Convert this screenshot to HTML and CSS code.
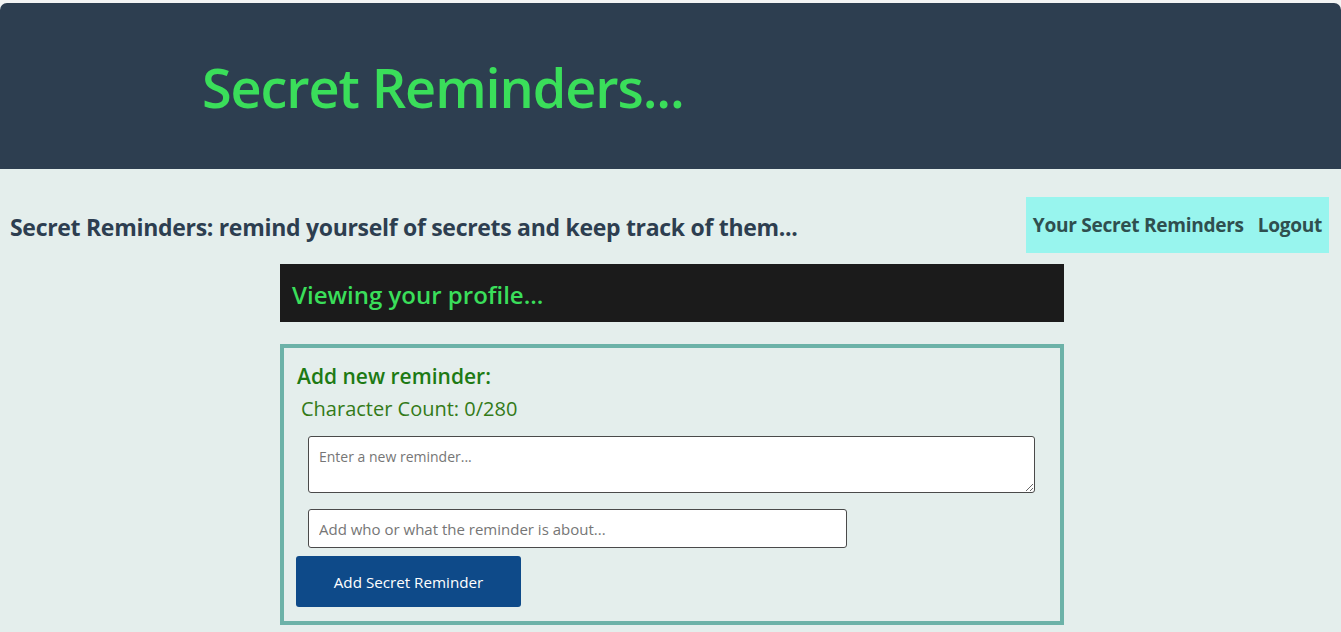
FILE: index.html
```html
<!DOCTYPE html>
<html lang="en">
<head>
<meta charset="utf-8">
<title>Secret Reminders</title>
<link rel="stylesheet" href="styles.css">
</head>
<body>
<div class="page">
  <header class="masthead">
    <h1 class="brand">Secret Reminders...</h1>
  </header>
  <div class="subbar">
    <h2 class="tagline">Secret Reminders: remind yourself of secrets and keep track of them...</h2>
    <nav class="nav">
      <a class="nav-link" href="#">Your Secret Reminders</a>
      <a class="nav-link" href="#">Logout</a>
    </nav>
  </div>
  <main class="content">
    <div class="profile-bar">
      <h3 class="profile-title">Viewing your profile...</h3>
    </div>
    <form class="reminder-form">
      <h4 class="form-title">Add new reminder:</h4>
      <p class="count">Character Count: 0/280</p>
      <textarea class="field-text" placeholder="Enter a new reminder..."></textarea>
      <input class="field-about" type="text" placeholder="Add who or what the reminder is about...">
      <button class="btn" type="button">Add Secret Reminder</button>
    </form>
  </main>
</div>
</body>
</html>
```
FILE: styles.css
```css
html, body {
  margin: 0;
  padding: 0;
  background: #f3f4f4;
}
body {
  font-family: "Open Sans", "Noto Sans", sans-serif;
}
.page {
  padding-top: 3px;
  min-height: 629px;
}
.masthead {
  background: #2d3e50;
  height: 166px;
  border-radius: 7px 7px 0 0;
  display: flex;
  align-items: center;
  padding-left: 202px;
  box-sizing: border-box;
}
.brand {
  margin: 0;
  font-size: 54px;
  font-weight: 600;
  color: #3ade5a;
  letter-spacing: -1.1px;
  line-height: 1;
  padding-top: 2px;
}
.subbar {
  background: #e4eeec;
  display: flex;
  justify-content: space-between;
  align-items: center;
  padding: 28px 12px 0 10px;
}
.tagline {
  margin: 0;
  padding-top: 3px;
  font-size: 23px;
  font-weight: 700;
  color: #2d3e50;
  letter-spacing: -0.3px;
}
.nav {
  background: #98f5ee;
  height: 56px;
  display: flex;
  align-items: center;
  gap: 14px;
  padding: 0 7px;
}
.nav-link {
  color: #2f4f4f;
  font-size: 19.1px;
  font-weight: 700;
  text-decoration: none;
  letter-spacing: -0.3px;
}
.content {
  background: #e4eeec;
  padding: 11px 0 8px 280px;
}
.profile-bar {
  width: 784px;
  height: 58px;
  background: #1b1b1b;
  display: flex;
  align-items: center;
  padding-left: 12px;
  box-sizing: border-box;
}
.profile-title {
  margin: 0;
  font-size: 24px;
  font-weight: 600;
  color: #3ade5a;
  letter-spacing: 0;
  padding-top: 2px;
}
.reminder-form {
  margin-top: 22px;
  width: 784px;
  box-sizing: border-box;
  border: 4px solid #6cb2a8;
  padding: 14px 12px 14px 12px;
  display: flex;
  flex-direction: column;
  align-items: flex-start;
}
.form-title {
  margin: 0 0 0 1px;
  font-size: 21px;
  font-weight: 600;
  color: #1d7a14;
  letter-spacing: 0;
  line-height: 28px;
}
.count {
  margin: 6px 0 0 5px;
  font-size: 20px;
  color: #337a18;
  line-height: 26px;
}
.field-text {
  margin: 14px 0 0 12px;
  width: 727px;
  height: 57px;
  box-sizing: border-box;
  border: 1px solid #4a4a4a;
  border-radius: 3px;
  padding: 10px;
  font-family: "Open Sans", "Noto Sans", sans-serif;
  font-size: 14px;
  background: #fff;
}
.field-about {
  margin: 16px 0 0 12px;
  width: 539px;
  height: 39px;
  box-sizing: border-box;
  border: 1px solid #4a4a4a;
  border-radius: 3px;
  padding: 0 10px;
  font-family: "Open Sans", "Noto Sans", sans-serif;
  font-size: 15px;
  background: #fff;
}
.field-text::placeholder,
.field-about::placeholder {
  color: #767676;
}
.btn {
  margin-top: 8px;
  width: 225px;
  height: 51px;
  background: #0e4a89;
  color: #fff;
  border: none;
  border-radius: 3px;
  font-family: "Open Sans", "Noto Sans", sans-serif;
  font-size: 15.2px;
}
```
